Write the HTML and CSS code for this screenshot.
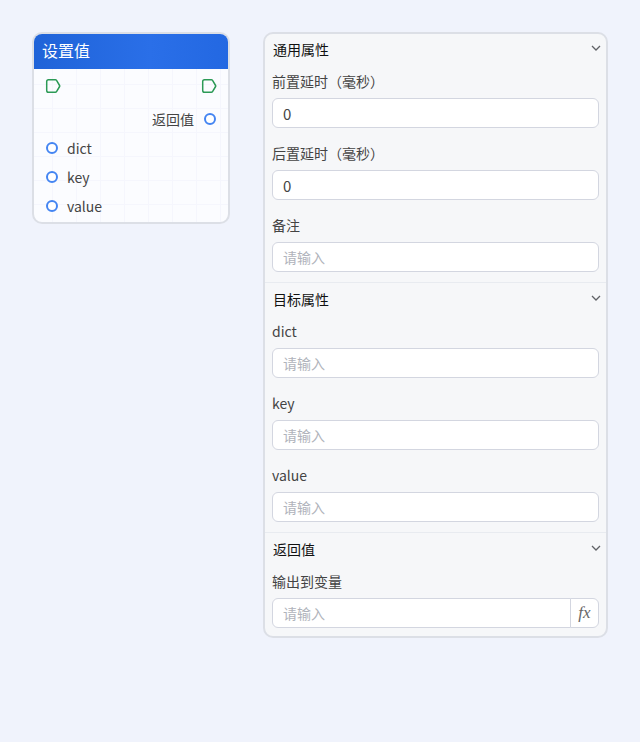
FILE: index.html
```html
<!DOCTYPE html>
<html lang="en">
<head>
    <meta charset="UTF-8">
    <meta name="viewport" content="width=device-width, initial-scale=1.0">
    <title>设置值</title>
    <link rel="stylesheet" href="styles.css">
</head>
<body>

<div class="canvas">
    <!-- Node -->
    <div class="node">
        <div class="node-title">设置值</div>
        <div class="node-body">
            <div class="node-row flow-row">
                <svg class="flow-port" width="16" height="16" viewBox="0 0 16 16"><path d="M3.5 1.7H10.5Q11 1.7 11.4 2.2L14.6 7.5Q14.9 8 14.6 8.5L11.4 13.8Q11 14.3 10.5 14.3H3.5Q1.7 14.3 1.7 12.5V3.5Q1.7 1.7 3.5 1.7Z"/></svg>
                <svg class="flow-port" width="16" height="16" viewBox="0 0 16 16"><path d="M3.5 1.7H10.5Q11 1.7 11.4 2.2L14.6 7.5Q14.9 8 14.6 8.5L11.4 13.8Q11 14.3 10.5 14.3H3.5Q1.7 14.3 1.7 12.5V3.5Q1.7 1.7 3.5 1.7Z"/></svg>
            </div>
            <div class="node-row output-row">
                <span>返回值</span>
                <i class="port"></i>
            </div>
            <div class="node-row input-row">
                <i class="port"></i>
                <span>dict</span>
            </div>
            <div class="node-row input-row">
                <i class="port"></i>
                <span>key</span>
            </div>
            <div class="node-row input-row">
                <i class="port"></i>
                <span>value</span>
            </div>
        </div>
    </div>

    <!-- Properties -->
    <div class="panel">
        <div class="section">
            <div class="section-head">
                <span>通用属性</span>
                <svg class="chevron" width="12" height="12" viewBox="0 0 12 12"><path d="M2 4L6 8L10 4"/></svg>
            </div>
            <div class="field">
                <label>前置延时（毫秒）</label>
                <input class="text-input filled" type="text" value="0">
            </div>
            <div class="field">
                <label>后置延时（毫秒）</label>
                <input class="text-input filled" type="text" value="0">
            </div>
            <div class="field">
                <label>备注</label>
                <input class="text-input" type="text" placeholder="请输入">
            </div>
        </div>
        <div class="section">
            <div class="section-head">
                <span>目标属性</span>
                <svg class="chevron" width="12" height="12" viewBox="0 0 12 12"><path d="M2 4L6 8L10 4"/></svg>
            </div>
            <div class="field">
                <label>dict</label>
                <input class="text-input" type="text" placeholder="请输入">
            </div>
            <div class="field">
                <label>key</label>
                <input class="text-input" type="text" placeholder="请输入">
            </div>
            <div class="field">
                <label>value</label>
                <input class="text-input" type="text" placeholder="请输入">
            </div>
        </div>
        <div class="section">
            <div class="section-head">
                <span>返回值</span>
                <svg class="chevron" width="12" height="12" viewBox="0 0 12 12"><path d="M2 4L6 8L10 4"/></svg>
            </div>
            <div class="field last">
                <label>输出到变量</label>
                <div class="input-group">
                    <input class="text-input" type="text" placeholder="请输入">
                    <span class="fx">fx</span>
                </div>
            </div>
        </div>
    </div>
</div>

</body>
</html>
```
FILE: styles.css
```css
body {
    margin: 0;
    padding: 0;
    background-color: #f0f3fc;
    font-family: "Noto Sans CJK SC", "Noto Sans", sans-serif;
    color: #444;
}
.canvas {
    display: flex;
    align-items: flex-start;
    gap: 33px;
    padding: 32px 32px 0 32px;
}

/* node */
.node {
    width: 194px;
    flex: none;
    border: 2px solid #dcdfe6;
    border-radius: 10px;
    overflow: hidden;
    background-color: #fbfcff;
}
.node-title {
    height: 35px;
    line-height: 33px;
    padding-left: 8px;
    font-size: 16px;
    color: #fff;
    background: linear-gradient(90deg, #1f63d8 0%, #2a6fe8 60%, #2368e2 100%);
}
.node-body {
    padding: 2px 0;
    background-image: linear-gradient(#f5f6fd 1px, transparent 1px), linear-gradient(90deg, #f5f6fd 1px, transparent 1px);
    background-size: 24px 24px;
    background-position: 18px 15px;
}
.node-row {
    display: flex;
    align-items: center;
    height: 29px;
    padding: 0 12px;
    font-size: 14px;
}
.flow-row {
    justify-content: space-between;
    height: 30px;
    padding: 0 11px;
}
.output-row {
    justify-content: flex-end;
    margin-top: 3px;
    gap: 10px;
}
.input-row {
    gap: 9px;
}
.flow-port {
    fill: none;
    stroke: #2c9a56;
    stroke-width: 1.5;
}
.port {
    width: 8px;
    height: 8px;
    border: 2px solid #4485f2;
    border-radius: 50%;
    background-color: #fff;
}

/* panel */
.panel {
    width: 341px;
    flex: none;
    border: 2px solid #dcdfe6;
    border-radius: 10px;
    background-color: #f6f7f9;
}
.section {
    padding-bottom: 1px;
}
.section + .section {
    border-top: 1px solid #e8ebf0;
    padding-top: 1px;
}
.section-head {
    display: flex;
    justify-content: space-between;
    height: 31px;
    line-height: 30px;
    padding: 0 4px 0 8px;
    font-size: 14px;
    color: #111;
}
.chevron {
    margin-top: 8px;
    fill: none;
    stroke: #606266;
    stroke-width: 1.3;
}
.field {
    padding: 0 7px 9px 7px;
}
.field.last {
    padding-bottom: 7px;
}
.field label {
    display: block;
    height: 33px;
    line-height: 32px;
    font-size: 14px;
}
.text-input {
    display: block;
    box-sizing: border-box;
    width: 100%;
    height: 30px;
    padding: 0 10px;
    border: 1px solid #d3d6e0;
    border-radius: 6px;
    background-color: #fff;
    font-family: inherit;
    font-size: 14px;
    color: #444;
    outline: none;
}
.text-input.filled {
    font-size: 15px;
}
.text-input::placeholder {
    color: #b0b3bb;
}
.input-group {
    display: flex;
}
.input-group .text-input {
    flex: 1;
    min-width: 0;
    border-radius: 6px 0 0 6px;
}
.fx {
    box-sizing: border-box;
    width: 29px;
    height: 30px;
    line-height: 27px;
    text-align: center;
    border: 1px solid #d3d6e0;
    border-radius: 0 6px 6px 0;
    margin-left: -1px;
    background-color: #fff;
    font-family: "Liberation Serif", serif;
    font-style: italic;
    font-size: 17px;
    color: #666;
}
```
